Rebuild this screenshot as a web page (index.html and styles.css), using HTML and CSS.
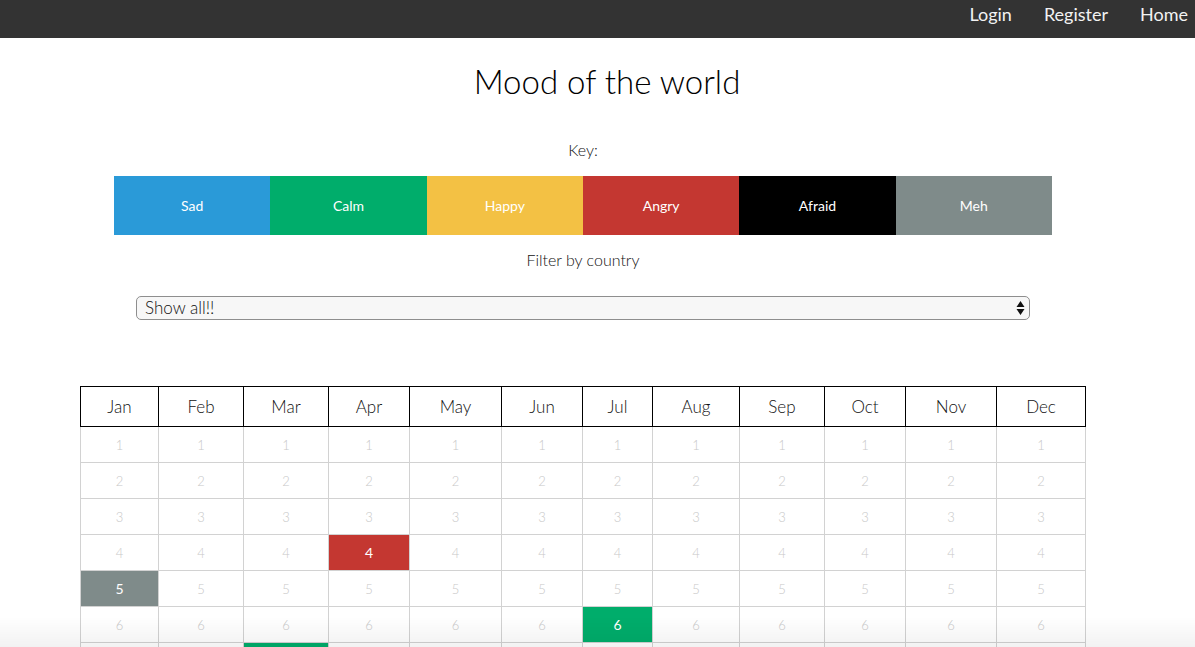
FILE: index.html
```html
<!DOCTYPE html>
<html lang="en">
<head>
<meta charset="utf-8">
<title>Mood of the world</title>
<link rel="stylesheet" href="styles.css">
</head>
<body>
<nav class="topbar">
  <a class="nav-link" href="#">Login</a>
  <a class="nav-link" href="#">Register</a>
  <a class="nav-link" href="#">Home</a>
</nav>
<main class="page">
  <h1 class="title">Mood of the world</h1>
  <p class="label key-label">Key:</p>
  <div class="key">
    <div class="key-item sad">Sad</div>
    <div class="key-item calm">Calm</div>
    <div class="key-item happy">Happy</div>
    <div class="key-item angry">Angry</div>
    <div class="key-item afraid">Afraid</div>
    <div class="key-item meh">Meh</div>
  </div>
  <p class="label filter-label">Filter by country</p>
  <div class="select-wrap">
    <select class="country-select">
      <option>Show all!!</option>
    </select>
    <svg class="select-arrows" width="9" height="16" viewBox="0 0 9 16"><path d="M4.5 1 L8.5 7 H0.5 Z M4.5 15 L8.5 9 H0.5 Z" fill="#111"/></svg>
  </div>
  <table class="calendar">
    <colgroup>
      <col class="c1"><col class="c2"><col class="c3"><col class="c4"><col class="c5"><col class="c6">
      <col class="c7"><col class="c8"><col class="c9"><col class="c10"><col class="c11"><col class="c12">
    </colgroup>
    <thead>
      <tr><th>Jan</th><th>Feb</th><th>Mar</th><th>Apr</th><th>May</th><th>Jun</th><th>Jul</th><th>Aug</th><th>Sep</th><th>Oct</th><th>Nov</th><th>Dec</th></tr>
    </thead>
    <tbody>
      <tr><td>1</td><td>1</td><td>1</td><td>1</td><td>1</td><td>1</td><td>1</td><td>1</td><td>1</td><td>1</td><td>1</td><td>1</td></tr>
      <tr><td>2</td><td>2</td><td>2</td><td>2</td><td>2</td><td>2</td><td>2</td><td>2</td><td>2</td><td>2</td><td>2</td><td>2</td></tr>
      <tr><td>3</td><td>3</td><td>3</td><td>3</td><td>3</td><td>3</td><td>3</td><td>3</td><td>3</td><td>3</td><td>3</td><td>3</td></tr>
      <tr><td>4</td><td>4</td><td>4</td><td class="mood angry">4</td><td>4</td><td>4</td><td>4</td><td>4</td><td>4</td><td>4</td><td>4</td><td>4</td></tr>
      <tr><td class="mood meh">5</td><td>5</td><td>5</td><td>5</td><td>5</td><td>5</td><td>5</td><td>5</td><td>5</td><td>5</td><td>5</td><td>5</td></tr>
      <tr><td>6</td><td>6</td><td>6</td><td>6</td><td>6</td><td>6</td><td class="mood calm">6</td><td>6</td><td>6</td><td>6</td><td>6</td><td>6</td></tr>
      <tr><td>7</td><td>7</td><td class="mood calm">7</td><td>7</td><td>7</td><td>7</td><td>7</td><td>7</td><td>7</td><td>7</td><td>7</td><td>7</td></tr>
    </tbody>
  </table>
</main>
<div class="bottom-fade"></div>
</body>
</html>
```

FILE: styles.css
```css
html, body {
  margin: 0;
  padding: 0;
  overflow: hidden;
  background: #fff;
}
body {
  font-family: "Lato", "Open Sans", sans-serif;
  font-weight: 300;
  color: #111;
}
.topbar {
  height: 38px;
  background: #333;
  display: flex;
  justify-content: flex-end;
  align-items: flex-start;
  gap: 32px;
  padding: 3px 7px 0 0;
  box-sizing: border-box;
}
.nav-link {
  color: #f2f2f2;
  text-decoration: none;
  font-size: 18px;
  line-height: 22px;
  font-weight: 400;
}
.page {
  width: 1166px;
  display: flex;
  flex-direction: column;
  align-items: center;
}
.title {
  margin: 24px 0 0 48px;
  font-size: 33px;
  line-height: 38px;
  font-weight: 300;
  color: #000;
}
.label {
  margin: 0;
  font-size: 16px;
  line-height: 20px;
  color: #111;
}
.key-label {
  margin-top: 40px;
}
.key {
  margin-top: 16px;
  width: 938px;
  height: 59px;
  display: flex;
}
.key-item {
  flex: 1;
  display: flex;
  align-items: center;
  justify-content: center;
  color: #fff;
  font-size: 14px;
  font-weight: 400;
}
.sad { background: #2a9ad8; }
.calm { background: #00ad6b; }
.happy { background: #f3c144; }
.angry { background: #c43731; }
.afraid { background: #000; }
.meh { background: #7f8b8a; }
.filter-label {
  margin-top: 15px;
}
.select-wrap {
  position: relative;
  margin-top: 26px;
  width: 894px;
}
.country-select {
  -webkit-appearance: none;
  appearance: none;
  width: 100%;
  height: 24px;
  box-sizing: border-box;
  border: 1px solid #8e8e8e;
  border-radius: 5px;
  background: #f7f7f7;
  font-family: "Lato", "Open Sans", sans-serif;
  font-weight: 300;
  font-size: 17px;
  color: #111;
  padding: 0 8px;
  line-height: 22px;
}
.select-arrows {
  position: absolute;
  right: 5px;
  top: 4px;
  pointer-events: none;
}
.calendar {
  margin-top: 66px;
  width: 1005px;
  table-layout: fixed;
  border-collapse: collapse;
}
.c1 { width: 78px; }
.c2 { width: 85px; }
.c3 { width: 85px; }
.c4 { width: 81px; }
.c5 { width: 92px; }
.c6 { width: 81px; }
.c7 { width: 70px; }
.c8 { width: 87px; }
.c9 { width: 85px; }
.c10 { width: 81px; }
.c11 { width: 91px; }
.c12 { width: 89px; }
.calendar th {
  border: 1px solid #000;
  height: 39px;
  padding: 0;
  font-size: 17px;
  font-weight: 300;
  color: #111;
  text-align: center;
}
.calendar td {
  border: 1px solid #d2d2d2;
  height: 35px;
  padding: 0;
  text-align: center;
  font-size: 13px;
  color: #c8c8c8;
  font-weight: 300;
}
.calendar td.mood {
  color: #fff;
  font-size: 14px;
  font-weight: 400;
}
.bottom-fade {
  position: fixed;
  left: 0;
  right: 0;
  bottom: 0;
  height: 30px;
  background: linear-gradient(to bottom, rgba(0,0,0,0), rgba(0,0,0,0.05));
  pointer-events: none;
}
```
